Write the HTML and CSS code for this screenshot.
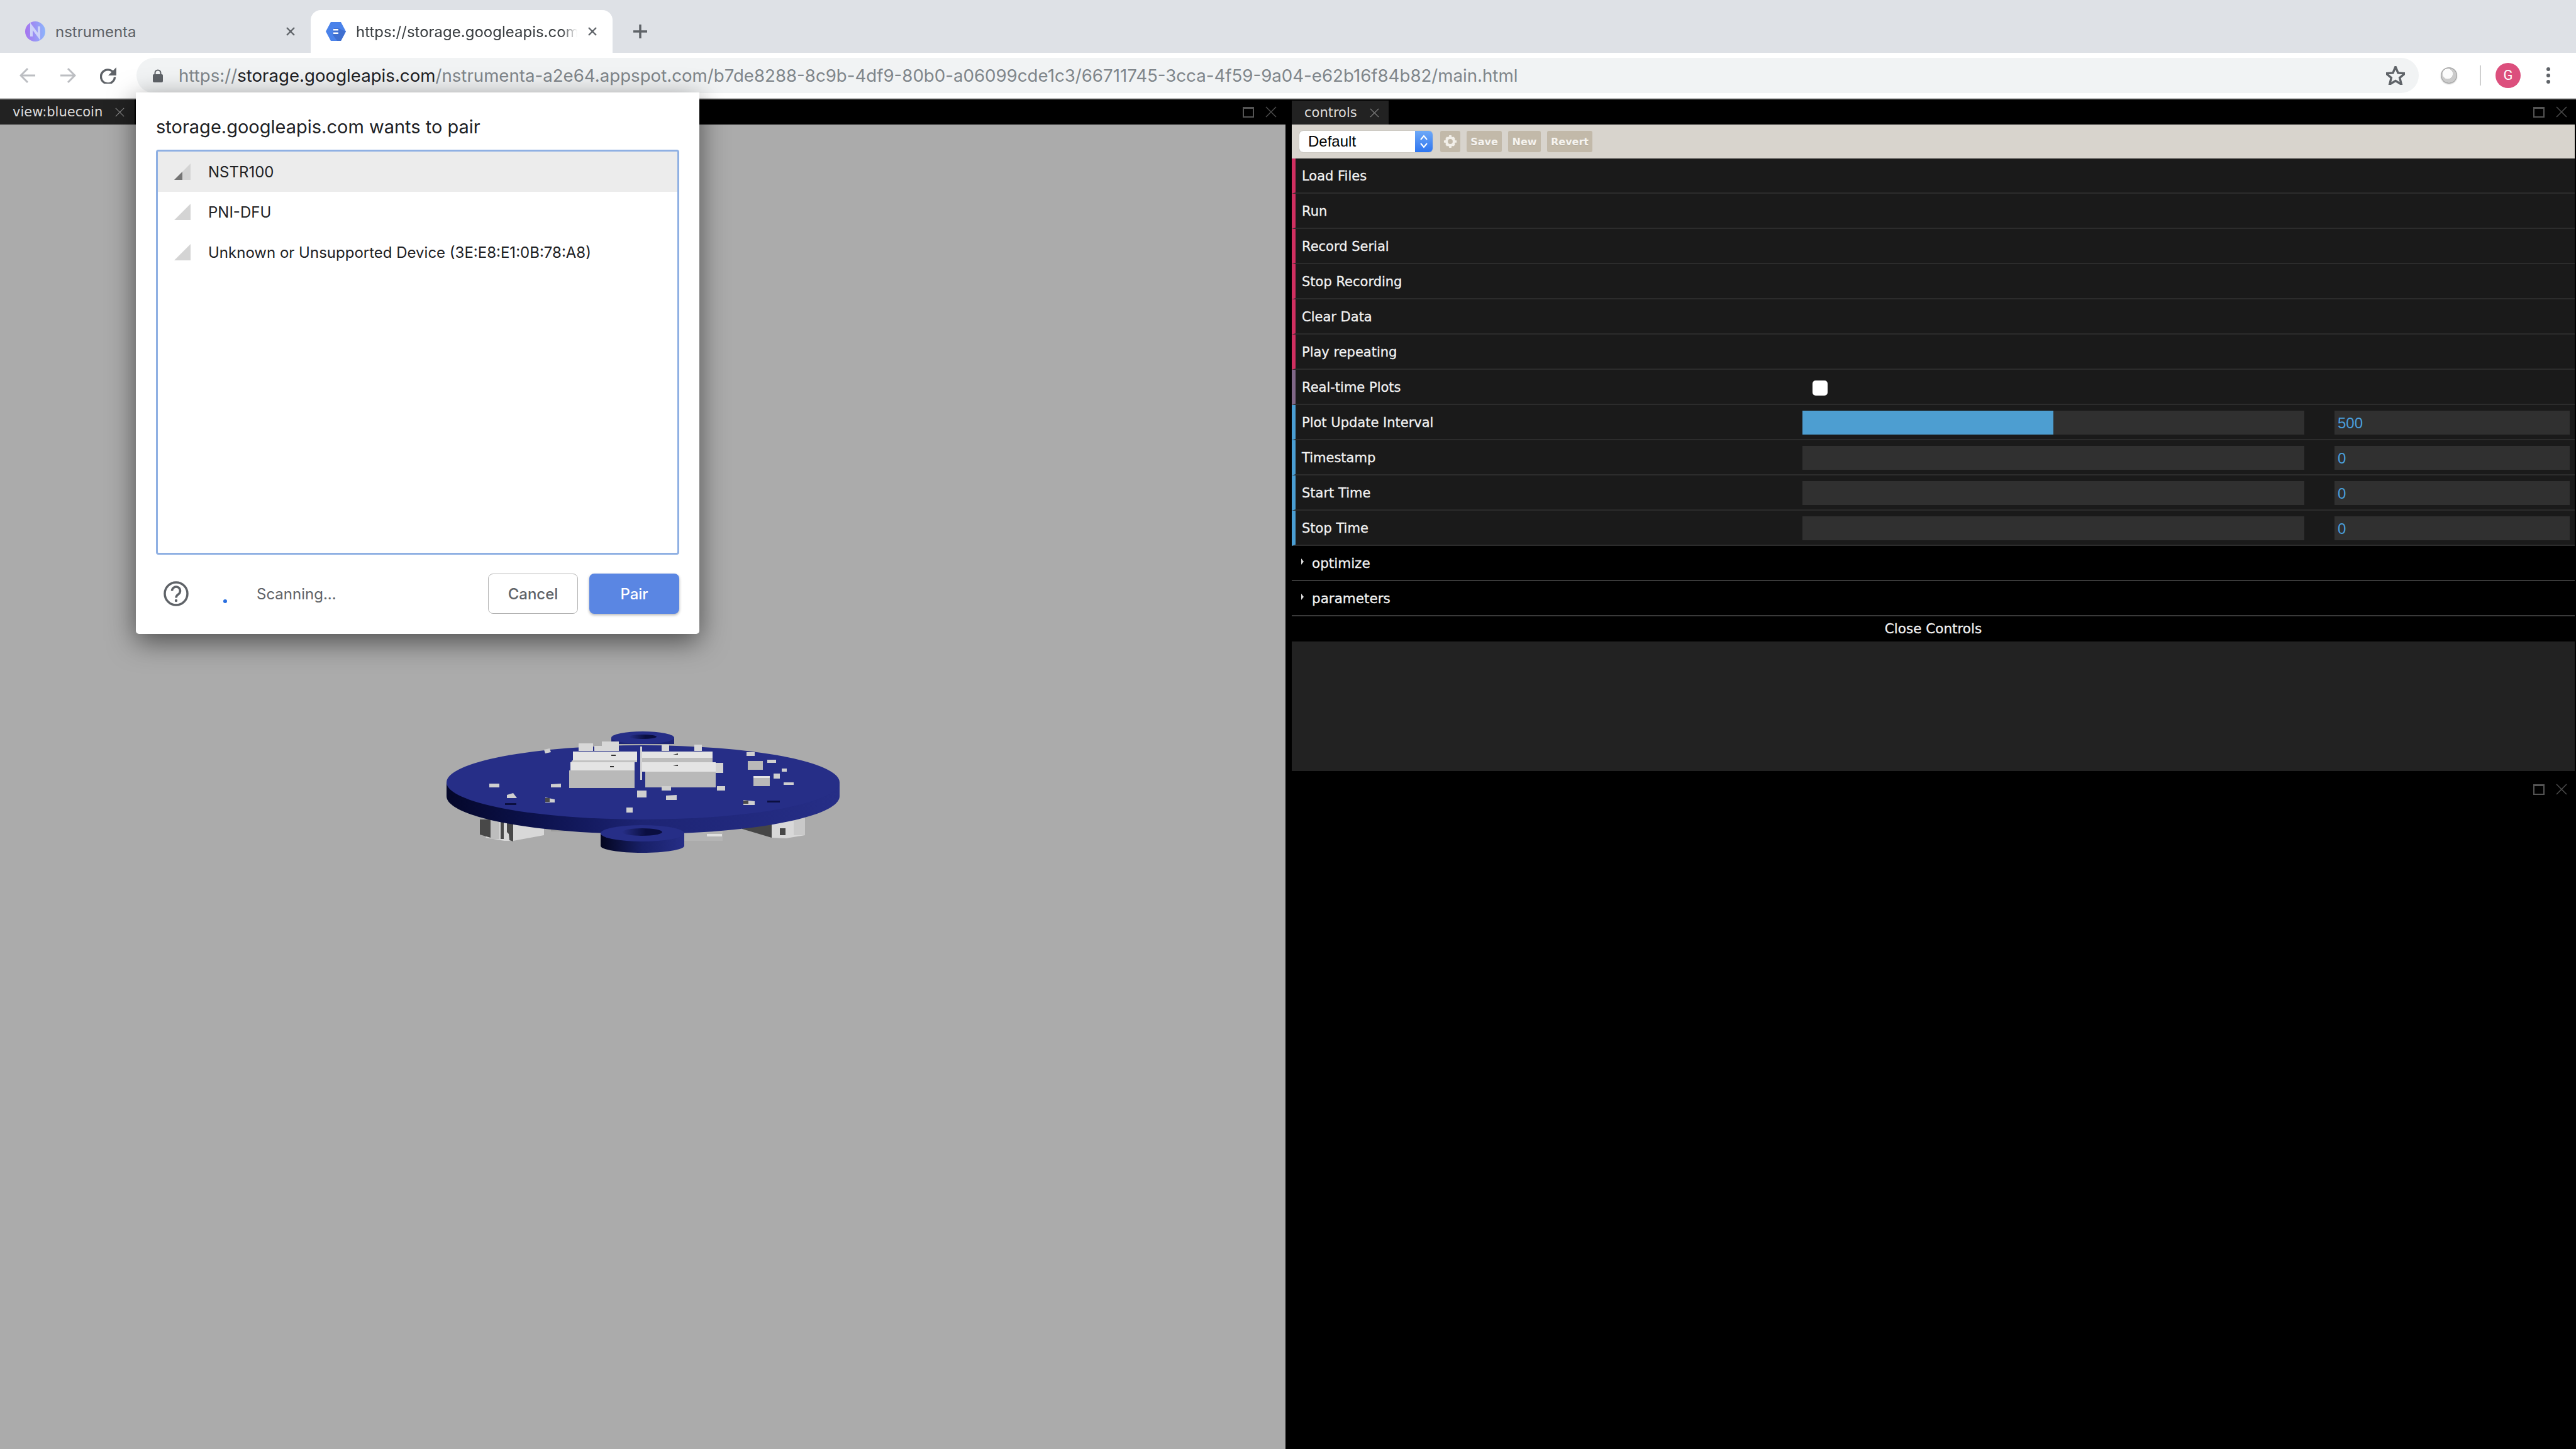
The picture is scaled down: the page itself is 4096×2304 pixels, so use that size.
FILE: index.html

```html
<!DOCTYPE html>
<html lang="en">
<head>
    <meta charset="UTF-8">
    <title>nstrumenta</title>
    <link rel="stylesheet" href="styles.css">
</head>
<body>
    <div class="tabstrip">
        <div class="tab">
            <svg class="favicon" viewBox="0 0 32 32">
                <defs>
                    <linearGradient id="nGrad" x1="0" x2="1" y1="0" y2="0">
                        <stop offset="0" stop-color="#a673ef"/>
                        <stop offset="1" stop-color="#8db4fb"/>
                    </linearGradient>
                </defs>
                <circle cx="16" cy="16" r="16" fill="url(#nGrad)"/>
                <path d="M10 24V8l12 16V8" fill="none" stroke="#cdd2f8" stroke-width="4"/>
            </svg>
            <span class="tab-title">nstrumenta</span>
            <svg class="tab-close" viewBox="0 0 16 16"><path d="M2 2l12 12M14 2L2 14"/></svg>
        </div>
        <div class="tab tab-active">
            <svg class="favicon" viewBox="0 0 32 32">
                <path d="M8 1h16l8 15-8 15H8L0 16z" fill="#4a82ea"/>
                <path d="M13 11h7l12 5-8 15h-6l-7-10z" fill="#3f6fd0"/>
                <path d="M12 12h8v2.500h-8zM12 17.500h8V20h-8z" fill="#fff"/>
            </svg>
            <span class="tab-title">https://storage.googleapis.com</span>
            <svg class="tab-close" viewBox="0 0 16 16"><path d="M2 2l12 12M14 2L2 14"/></svg>
        </div>
        <svg class="new-tab" viewBox="0 0 24 24"><path d="M12 1v22M1 12h22"/></svg>
    </div>

    <div class="toolbar">
        <svg class="nav-icon nav-off" viewBox="0 0 26 26"><path d="M25 13H3M13 2L2 13l11 11"/></svg>
        <svg class="nav-icon nav-off" viewBox="0 0 26 26"><path d="M1 13h22M13 2l11 11-11 11"/></svg>
        <svg class="nav-icon nav-reload" viewBox="0 0 26 26">
            <path d="M21.500 8.500A11 11 0 1 0 23.500 15.500"/>
            <path class="solid" d="M26 0v13H13z"/>
        </svg>
        <div class="omnibox">
            <svg class="lock" viewBox="0 0 16 21">
                <path d="M3.500 10V6a4.500 4.500 0 0 1 9 0v4" fill="none" stroke="#5f6368" stroke-width="2"/>
                <rect x="0" y="8" width="16" height="13" rx="2" fill="#5f6368"/>
            </svg>
            <span class="url"><span class="url-dim">https://</span>storage.googleapis.com<span class="url-dim">/nstrumenta-a2e64.appspot.com/b7de8288-8c9b-4df9-80b0-a06099cde1c3/66711745-3cca-4f59-9a04-e62b16f84b82/main.html</span></span>
            <svg class="star" viewBox="2 2 26 26"><path d="M15 3l3.500 8.500 9.500.7-7.200 6 2.300 9.100-8.100-5-8.100 5 2.300-9.100-7.200-6 9.500-.7z"/></svg>
        </div>
        <div class="ext-icon"></div>
        <div class="toolbar-sep"></div>
        <div class="avatar">G</div>
        <div class="menu-dots"><i></i><i></i><i></i></div>
    </div>

    <div class="workspace">
        <div class="view-panel">
            <div class="panel-head">
                <div class="panel-tab view-tab">view:bluecoin <svg class="x-icon" viewBox="0 0 18 18"><path d="M1 1l16 16M17 1L1 17"/></svg></div>
                <div class="panel-actions">
                    <span class="max-icon"></span>
                    <svg class="x-icon" viewBox="0 0 18 18"><path d="M1 1l16 16M17 1L1 17"/></svg>
                </div>
            </div>
            <div class="view-canvas">
                <svg class="board" viewBox="702 1131 640 240" width="640" height="240">
                    <defs>
                        <linearGradient id="edge" x1="0" x2="1" y1="0" y2="0">
                            <stop offset="0" stop-color="#04072a"/>
                            <stop offset=".25" stop-color="#0d1350"/>
                            <stop offset=".5" stop-color="#1d2474"/>
                            <stop offset="1" stop-color="#262e87"/>
                        </linearGradient>
                        <linearGradient id="tabEdge" x1="0" x2="1" y1="0" y2="0">
                            <stop offset="0" stop-color="#03051f"/>
                            <stop offset=".5" stop-color="#182068"/>
                            <stop offset="1" stop-color="#262e87"/>
                        </linearGradient>
                        <linearGradient id="hole" x1="0" x2="1" y1="0" y2="0">
                            <stop offset="0" stop-color="#262e87"/>
                            <stop offset=".6" stop-color="#0a0e40"/>
                            <stop offset="1" stop-color="#0a0e40"/>
                        </linearGradient>
                    </defs>

                    <!-- connectors under the board -->
                    <path d="M790 1302l75 11v15l-49 9-14 0-30-5z" fill="#d8d8d8"/>
                    <path d="M763 1303h17v29l-17-5zM796 1305h5v29h-5zM806 1306h10v32l-6-2-1-10-3-3z" fill="#484848"/>
                    <path d="M780 1304h14v30h-14z" fill="#bdbdbd"/>
                    <path d="M876 1315l22 2v5h-22z" fill="#9a9a9a"/>
                    <path d="M1227 1306l53-11v33l-30 5-23-1z" fill="#d8d8d8"/>
                    <path d="M1180 1308l47 3v21l-47-14z" fill="#464646"/>
                    <path d="M1262 1295h18v33h-18z" fill="#c9c9c9"/>
                    <path d="M1240 1317h9v11h-9z" fill="#464646"/>
                    <path d="M1088 1317h61v20h-61z" fill="#b4b4b4"/>
                    <path d="M1124 1326h24v4h-24zM1088 1320h16v3h-16z" fill="#e0e0e0"/>

                    <!-- back mounting tab -->
                    <path d="M972 1173v10h100v-10z" fill="#1d2474"/>
                    <ellipse cx="1022" cy="1173" rx="50" ry="10" fill="#262e87"/>
                    <ellipse cx="1022" cy="1171.500" rx="22" ry="3.500" fill="url(#hole)"/>

                    <!-- board -->
                    <path d="M710 1244v22c0 33 140 60 312 60s313-27 313-60v-22z" fill="url(#edge)"/>
                    <ellipse cx="1022.500" cy="1244" rx="312.500" ry="59" fill="#262e87"/>

                    <!-- front mounting tab -->
                    <path d="M955 1325v20c0 6 30 11 66 11s67-5 67-11v-20z" fill="url(#tabEdge)"/>
                    <ellipse cx="1021.500" cy="1325" rx="66.500" ry="13" fill="#262e87"/>
                    <ellipse cx="1021" cy="1323" rx="32" ry="6" fill="url(#hole)"/>

                    <!-- big cans -->
                    <path d="M920 1182h23v12h-23zM945 1186h12v-7h27v15h-39zM1052 1184h12v10h-12zM1104 1184h12v10h-12z" fill="#d8d8d8"/>
                    <path d="M911 1195h102v15H911zM907 1212h102v14H907z" fill="#e4e4e4"/>
                    <path d="M910 1209h103v3H908z" fill="#c2c2c2"/>
                    <path d="M905 1225h104v28H905z" fill="#b9b9b9"/>
                    <path d="M1018 1187h3v53h-3z" fill="#d2d2d2"/>
                    <path d="M1021 1195h112v10H1021zM1021 1212h117v15H1021z" fill="#e4e4e4"/>
                    <path d="M1021 1205h112v7H1021z" fill="#bdbdbd"/>
                    <path d="M1026 1227h112v25H1026z" fill="#b9b9b9"/>
                    <path d="M1138 1213h12v16h-12z" fill="#d2d2d2"/>
                    <path d="M972 1200h7v2h-7zM970 1218h6v2h-6zM1070 1200l8-2v2h-8zM1070 1218l8-2v2h-8z" fill="#333"/>

                    <!-- small parts -->
                    <g fill="#cfcfcf">
                        <path d="M865 1192l9-2 2 6-9 2z"/>
                        <path d="M778 1246h16v6h-16z"/>
                        <path d="M876 1247l16-1v6h-16z"/>
                        <path d="M806 1264l10-3 6 8h-16z"/>
                        <path d="M867 1268l15 3v5h-15z"/>
                        <path d="M1013 1257h15v11h-15z"/>
                        <path d="M1059 1265l17-1v8h-17z"/>
                        <path d="M996 1284h10v8h-10z"/>
                        <path d="M1052 1250h15v7h-15z"/>
                        <path d="M1140 1250h13v7h-13z"/>
                        <path d="M1182 1272l18 2v6h-18z"/>
                        <path d="M1187 1196h13v6h-13z"/>
                        <path d="M1220 1208h14v5h-14z"/>
                        <path d="M1243 1222h8v5h-8z"/>
                        <path d="M1230 1230h10v8h-10z"/>
                        <path d="M1246 1244h16v4h-16z"/>
                    </g>
                    <path d="M1189 1210h24v14h-24zM1198 1237h26v13h-26z" fill="#b9b9b9"/>
                    <path d="M1198 1234h26v3h-26z" fill="#e4e4e4"/>
                    <path d="M867 1269h7v6h-7zM1182 1273h8v5h-8z" fill="#4a4a4a"/>
                    <path d="M803 1277h18v3h-18zM1220 1273h20v3h-20z" fill="#0b0f40"/>
                </svg>
            </div>
        </div>

        <div class="side">
            <div class="panel-head">
                <div class="panel-tab controls-tab">controls <svg class="x-icon" viewBox="0 0 18 18"><path d="M1 1l16 16M17 1L1 17"/></svg></div>
                <div class="panel-actions">
                    <span class="max-icon"></span>
                    <svg class="x-icon" viewBox="0 0 18 18"><path d="M1 1l16 16M17 1L1 17"/></svg>
                </div>
            </div>
            <div class="gui">
                <div class="preset-bar">
                    <div class="preset-select">
                        <span>Default</span>
                        <div class="preset-arrows">
                            <svg viewBox="0 0 14 24"><path d="M2 9l5-6 5 6M2 15l5 6 5-6"/></svg>
                        </div>
                    </div>
                    <div class="preset-btn gear-btn">
                        <svg viewBox="0 0 24 24">
                            <circle cx="12" cy="12" r="6.500" fill="none" stroke="#f2efe9" stroke-width="4.500"/>
                            <path d="M10 1h4v5h-4zM10 18h4v5h-4zM1 10h5v4H1zM18 10h5v4h-5z" fill="#f2efe9"/>
                            <path d="M3.500 6.500l3-3 3 3-3 3zM14.500 6.500l3-3 3 3-3 3zM3.500 17.500l3-3 3 3-3 3zM14.500 17.500l3-3 3 3-3 3z" fill="#f2efe9"/>
                        </svg>
                    </div>
                    <div class="preset-btn save-btn">Save</div>
                    <div class="preset-btn new-btn">New</div>
                    <div class="preset-btn revert-btn">Revert</div>
                </div>

                <div class="row row-fn">Load Files</div>
                <div class="row row-fn">Run</div>
                <div class="row row-fn">Record Serial</div>
                <div class="row row-fn">Stop Recording</div>
                <div class="row row-fn">Clear Data</div>
                <div class="row row-fn">Play repeating</div>
                <div class="row row-bool">
                    <span class="row-label">Real-time Plots</span>
                    <span class="check"></span>
                </div>
                <div class="row row-num">
                    <span class="row-label">Plot Update Interval</span>
                    <div class="slider"><div class="slider-fill" style="width: 50%"></div></div>
                    <div class="num-field">500</div>
                </div>
                <div class="row row-num">
                    <span class="row-label">Timestamp</span>
                    <div class="slider"></div>
                    <div class="num-field">0</div>
                </div>
                <div class="row row-num">
                    <span class="row-label">Start Time</span>
                    <div class="slider"></div>
                    <div class="num-field">0</div>
                </div>
                <div class="row row-num">
                    <span class="row-label">Stop Time</span>
                    <div class="slider"></div>
                    <div class="num-field">0</div>
                </div>
                <div class="row row-folder"><i class="caret"></i>optimize</div>
                <div class="row row-folder"><i class="caret"></i>parameters</div>
                <div class="close-controls">Close Controls</div>
                <div class="gui-empty"></div>
            </div>
            <div class="panel-head lower-head">
                <div class="panel-actions">
                    <span class="max-icon"></span>
                    <svg class="x-icon" viewBox="0 0 18 18"><path d="M1 1l16 16M17 1L1 17"/></svg>
                </div>
            </div>
        </div>
    </div>

    <!-- bluetooth chooser lies over the page -->
    <div class="chooser">
        <div class="chooser-title">storage.googleapis.com wants to pair</div>
        <div class="device-list">
            <div class="device device-on">
                <svg class="signal" viewBox="0 0 26 26">
                    <path d="M26 0v26H0z" fill="#d4d4d4"/>
                    <path d="M13 13v13H0z" fill="#757575"/>
                </svg>
                NSTR100
            </div>
            <div class="device">
                <svg class="signal" viewBox="0 0 26 26"><path d="M26 0v26H0z" fill="#d4d4d4"/></svg>
                PNI-DFU
            </div>
            <div class="device">
                <svg class="signal" viewBox="0 0 26 26"><path d="M26 0v26H0z" fill="#d4d4d4"/></svg>
                Unknown or Unsupported Device (3E:E8:E1:0B:78:A8)
            </div>
        </div>
        <div class="chooser-foot">
            <svg class="help" viewBox="0 0 40 40">
                <circle cx="20" cy="20" r="18" fill="none" stroke="#5f6368" stroke-width="3.500"/>
                <path d="M13.500 15.500a6.500 6.500 0 1 1 10 5.500c-2.500 1.700-3.500 2.700-3.500 5.500" fill="none" stroke="#5f6368" stroke-width="3.500"/>
                <circle cx="20" cy="31" r="2.200" fill="#5f6368"/>
            </svg>
            <span class="spinner-dot"></span>
            <span class="scanning">Scanning...</span>
            <div class="btn btn-cancel">Cancel</div>
            <div class="btn btn-pair">Pair</div>
        </div>
    </div>
</body>
</html>
```

FILE: styles.css

```css
html, body {
    margin: 0;
    padding: 0;
    width: 4096px;
    height: 2304px;
    overflow: hidden;
    background-color: #000;
    font-family: Inter, Roboto, sans-serif;
}

/* browser tabs */
.tabstrip {
    display: flex;
    align-items: flex-end;
    height: 84px;
    background-color: #dee1e6;
}
.tab {
    display: flex;
    align-items: center;
    box-sizing: border-box;
    width: 494px;
    height: 68px;
    padding: 0 24px 0 40px;
    color: #5f6368;
    font-size: 24px;
}
.tab-active {
    width: 480px;
    padding-left: 24px;
    background-color: #fff;
    border-radius: 16px 16px 0 0;
    color: #3c4043;
}
.favicon {
    flex: none;
    width: 32px;
    height: 32px;
    margin-right: 16px;
}
.tab-title {
    flex: 1;
    overflow: hidden;
    white-space: nowrap;
}
.tab-active .tab-title {
    -webkit-mask-image: linear-gradient(to right, #000 93%, transparent);
    mask-image: linear-gradient(to right, #000 93%, transparent);
}
.tab-close {
    flex: none;
    width: 16px;
    height: 16px;
    margin-left: 16px;
    fill: none;
    stroke: #5f6368;
    stroke-width: 2.400;
}
.new-tab {
    width: 24px;
    height: 24px;
    margin: 0 0 22px 32px;
    fill: none;
    stroke: #5f6368;
    stroke-width: 3.500;
}

/* toolbar */
.toolbar {
    display: flex;
    align-items: center;
    box-sizing: border-box;
    height: 74px;
    padding: 0 0 0 31px;
    background-color: #fff;
    border-bottom: 2px solid #bdbdbd;
}
.nav-icon {
    flex: none;
    width: 26px;
    height: 26px;
    margin-right: 38px;
    fill: none;
    stroke: #5f6368;
    stroke-width: 3;
}
.nav-off {
    stroke: #bcbec2;
}
.nav-reload {
    stroke-width: 3.400;
}
.nav-icon .solid {
    fill: #5f6368;
    stroke: none;
}
.omnibox {
    display: flex;
    align-items: center;
    box-sizing: border-box;
    width: 3629px;
    height: 56px;
    margin-left: -6px;
    padding: 0 22px 0 26px;
    background-color: #f1f3f4;
    border-radius: 28px;
}
.lock {
    flex: none;
    width: 16px;
    height: 21px;
    margin-right: 25px;
}
.url {
    flex: 1;
    color: #202124;
    font-size: 27.650px;
    white-space: nowrap;
}
.url-dim {
    color: #80868b;
}
.star {
    flex: none;
    width: 30px;
    height: 30px;
    fill: none;
    stroke: #5f6368;
    stroke-width: 3;
}
.ext-icon {
    flex: none;
    width: 26px;
    height: 26px;
    margin-left: 35px;
    border-radius: 50%;
    background:
        radial-gradient(circle at 42% 40%, #fbfbfb 36%, transparent 38%),
        radial-gradient(circle at 50% 50%, #cbcbcb 62%, #a8a8a8 64%);
    box-shadow: 0 1px 2px #ccc;
}
.toolbar-sep {
    flex: none;
    width: 2px;
    height: 32px;
    margin-left: 36px;
    background-color: #cfcfcf;
}
.avatar {
    flex: none;
    width: 40px;
    height: 40px;
    margin-left: 23px;
    border-radius: 50%;
    background-color: #dc4f7d;
    color: #fff;
    font-family: Roboto, sans-serif;
    font-size: 22px;
    line-height: 40px;
    text-align: center;
}
.menu-dots {
    display: flex;
    flex-direction: column;
    gap: 4px;
    margin-left: 41px;
}
.menu-dots i {
    display: block;
    width: 6px;
    height: 6px;
    border-radius: 50%;
    background-color: #5f6368;
}

/* page below the browser chrome */
.workspace {
    display: flex;
    height: 2146px;
    font-family: "DejaVu Sans", sans-serif;
}
.view-panel {
    display: flex;
    flex-direction: column;
    flex: none;
    width: 2044px;
}
.panel-head {
    display: flex;
    flex: none;
    align-items: flex-end;
    justify-content: space-between;
    height: 40px;
    background-color: #000;
}
.panel-tab {
    display: flex;
    align-items: center;
    gap: 20px;
    box-sizing: border-box;
    height: 38px;
    padding: 0 14px 0 20px;
    background-color: #222;
    color: #ddd;
    font-size: 21px;
}
.view-tab {
    width: 214px;
    height: 40px;
    white-space: nowrap;
}
.controls-tab {
    width: 154px;
}
.panel-actions {
    display: flex;
    align-items: center;
    gap: 18px;
    height: 40px;
    margin-left: auto;
    padding-right: 14px;
}
.max-icon {
    box-sizing: border-box;
    width: 18px;
    height: 17px;
    border: 2px solid #555;
    border-top-width: 3px;
}
.x-icon {
    flex: none;
    width: 18px;
    height: 18px;
    fill: none;
    stroke: #4d4d4d;
    stroke-width: 1.500;
}
.panel-tab .x-icon {
    stroke: #888;
    width: 15px;
    height: 15px;
}
.view-canvas {
    display: flex;
    flex: 1;
    align-items: center;
    justify-content: center;
    background-color: #ababab;
}
.board {
    display: block;
    filter: blur(0.7px);
}

/* right column */
.side {
    display: flex;
    flex-direction: column;
    flex: 1;
    padding: 0 2px 0 10px;
}
.side .panel-actions {
    padding-right: 12px;
}
.preset-bar {
    display: flex;
    align-items: center;
    box-sizing: border-box;
    height: 54px;
    padding: 0 0 0 12px;
    background-color: #d8d4cd;
}
.preset-select {
    display: flex;
    align-items: center;
    justify-content: space-between;
    width: 212px;
    height: 34px;
    background-color: #fff;
    border-radius: 6px;
    box-shadow: 0 0 1px #777;
    color: #000;
    font-family: "Liberation Sans", sans-serif;
    font-size: 24px;
}
.preset-select span {
    padding-left: 14px;
}
.preset-arrows {
    display: flex;
    align-items: center;
    justify-content: center;
    width: 28px;
    height: 34px;
    background: linear-gradient(#6ea9f7, #2e75f0);
    border-radius: 0 6px 6px 0;
}
.preset-arrows svg {
    width: 14px;
    height: 24px;
    fill: none;
    stroke: #fff;
    stroke-width: 2;
}
.preset-btn {
    display: flex;
    align-items: center;
    justify-content: center;
    box-sizing: border-box;
    height: 34px;
    margin-left: 10px;
    background-color: #c2b9a9;
    border-radius: 3px;
    color: #f5f3ef;
    font-size: 16px;
    font-weight: bold;
    text-shadow: 0 1px 0 #b0a694;
}
.gear-btn {
    width: 32px;
    margin-left: 12px;
}
.gear-btn svg {
    width: 22px;
    height: 22px;
}
.save-btn {
    width: 56px;
}
.new-btn {
    width: 52px;
}
.revert-btn {
    width: 72px;
}

.row {
    display: flex;
    align-items: center;
    box-sizing: border-box;
    height: 56px;
    padding: 1px 8px 0 10px;
    background-color: #1a1a1a;
    border-bottom: 2px solid #2c2c2c;
    border-left: 6px solid #d02f60;
    color: #f2f2f2;
    font-size: 21px;
    -webkit-text-stroke: 0.3px #f2f2f2;
}
.row-bool {
    border-left-color: #806787;
}
.row-num {
    border-left-color: #4a9ed3;
}
.row-label {
    flex: none;
    width: 796px;
}
.check {
    width: 24px;
    height: 24px;
    margin: 3px 0 0 16px;
    background-color: #fff;
    border-radius: 5px;
}
.slider {
    flex: none;
    width: 798px;
    height: 38px;
    background-color: #303030;
}
.slider-fill {
    height: 100%;
    background-color: #4d9ed1;
}
.num-field {
    box-sizing: border-box;
    flex: none;
    width: 374px;
    height: 38px;
    margin-left: 48px;
    padding-left: 5px;
    background-color: #303030;
    color: #4a9fdc;
    font-family: "Liberation Sans", sans-serif;
    font-size: 24px;
    line-height: 40px;
    -webkit-text-stroke: 0;
}
.row-folder {
    background-color: #000;
    border-left: none;
    border-bottom-color: #3a3a3a;
    padding-left: 15px;
    font-size: 21.500px;
}
.caret {
    width: 0;
    height: 0;
    margin: -6px 13px 0 0;
    border-top: 5px solid transparent;
    border-bottom: 5px solid transparent;
    border-left: 4px solid #ddd;
}
.close-controls {
    height: 40px;
    background-color: #000;
    color: #f2f2f2;
    font-size: 21.500px;
    line-height: 40px;
    text-align: center;
    -webkit-text-stroke: 0.3px #f2f2f2;
}
.gui-empty {
    height: 206px;
    background-color: #222;
}
.lower-head {
    margin-top: 9px;
}

/* device chooser */
.chooser {
    position: absolute;
    top: 147px;
    left: 216px;
    box-sizing: border-box;
    width: 896px;
    height: 861px;
    padding: 36px 32px 0;
    background-color: #fff;
    border-radius: 0 0 5px 5px;
    box-shadow: 0 12px 44px rgba(0, 0, 0, 0.55);
}
.chooser-title {
    color: #202124;
    font-size: 29px;
    line-height: 38px;
}
.device-list {
    box-sizing: border-box;
    height: 644px;
    margin-top: 17px;
    border: 3px solid #8fb0e3;
    border-radius: 4px;
}
.device {
    display: flex;
    align-items: center;
    height: 64px;
    padding-left: 26px;
    color: #202124;
    font-size: 24px;
}
.device-on {
    background-color: #ececec;
}
.signal {
    flex: none;
    width: 26px;
    height: 26px;
    margin-right: 28px;
}
.chooser-foot {
    display: flex;
    align-items: center;
    height: 64px;
    margin-top: 30px;
}
.help {
    flex: none;
    width: 40px;
    height: 40px;
    margin-left: 12px;
}
.spinner-dot {
    flex: none;
    width: 6px;
    height: 6px;
    margin: 24px 0 0 55px;
    background-color: #2a6fe0;
    border-radius: 50%;
}
.scanning {
    flex: 1;
    margin-left: 47px;
    color: #5f6368;
    font-size: 24px;
}
.btn {
    display: flex;
    align-items: center;
    justify-content: center;
    box-sizing: border-box;
    width: 143px;
    height: 64px;
    border-radius: 8px;
    font-size: 24px;
    font-weight: 500;
}
.btn-cancel {
    border: 1px solid #b3b3b3;
    color: #5f6368;
}
.btn-pair {
    margin-left: 18px;
    background-color: #5a86e3;
    box-shadow: 0 2px 4px rgba(0, 0, 0, 0.3);
    color: #fff;
}
```
